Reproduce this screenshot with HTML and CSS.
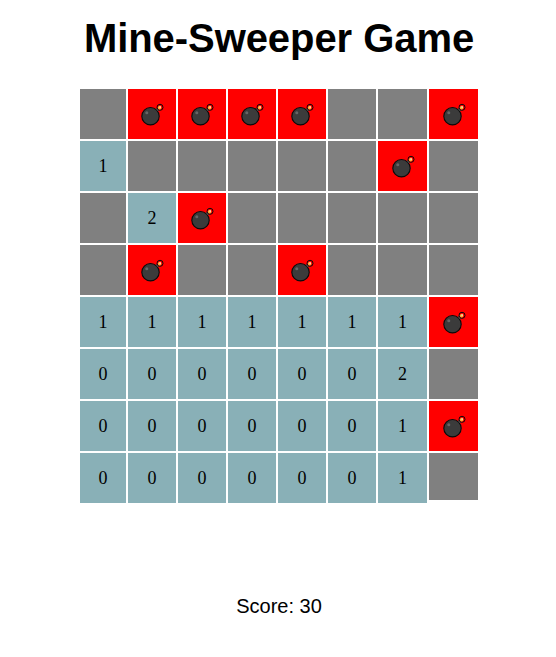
FILE: index.html
```html
<!DOCTYPE html>
<html lang="en">
<head>
<meta charset="utf-8">
<title>Mine-Sweeper Game</title>
<link rel="stylesheet" href="styles.css">
</head>
<body>
<svg class="defs" width="0" height="0" aria-hidden="true">
  <defs>
    <symbol id="bomb" viewBox="0 0 24 24">
      <path d="M14.5 8.5 L17 6 L19 8 L16.5 10.5 Z" fill="#8e8e8e" stroke="#222" stroke-width="0.6"/>
      <circle cx="10.5" cy="14.2" r="8.7" fill="#3b3b3b" stroke="#0a0a0a" stroke-width="1.1"/>
      <circle cx="6.8" cy="10.8" r="1.5" fill="#666"/>
      <circle cx="20" cy="5.3" r="3" fill="#f00" stroke="#0a0a0a" stroke-width="1"/>
      <circle cx="19.6" cy="5.8" r="1.7" fill="#f7b43a"/>
      <rect x="19.6" y="4.4" width="1.2" height="1.2" fill="#fff"/>
    </symbol>
  </defs>
</svg>
<h1 class="title">Mine-Sweeper Game</h1>
<div class="board">
  <div class="cell hidden"></div>
  <div class="cell mine"><svg class="bomb"><use href="#bomb"/></svg></div>
  <div class="cell mine"><svg class="bomb"><use href="#bomb"/></svg></div>
  <div class="cell mine"><svg class="bomb"><use href="#bomb"/></svg></div>
  <div class="cell mine"><svg class="bomb"><use href="#bomb"/></svg></div>
  <div class="cell hidden"></div>
  <div class="cell hidden"></div>
  <div class="cell mine"><svg class="bomb"><use href="#bomb"/></svg></div>

  <div class="cell open">1</div>
  <div class="cell hidden"></div>
  <div class="cell hidden"></div>
  <div class="cell hidden"></div>
  <div class="cell hidden"></div>
  <div class="cell hidden"></div>
  <div class="cell mine"><svg class="bomb"><use href="#bomb"/></svg></div>
  <div class="cell hidden"></div>

  <div class="cell hidden"></div>
  <div class="cell open">2</div>
  <div class="cell mine"><svg class="bomb"><use href="#bomb"/></svg></div>
  <div class="cell hidden"></div>
  <div class="cell hidden"></div>
  <div class="cell hidden"></div>
  <div class="cell hidden"></div>
  <div class="cell hidden"></div>

  <div class="cell hidden"></div>
  <div class="cell mine"><svg class="bomb"><use href="#bomb"/></svg></div>
  <div class="cell hidden"></div>
  <div class="cell hidden"></div>
  <div class="cell mine"><svg class="bomb"><use href="#bomb"/></svg></div>
  <div class="cell hidden"></div>
  <div class="cell hidden"></div>
  <div class="cell hidden"></div>

  <div class="cell open">1</div>
  <div class="cell open">1</div>
  <div class="cell open">1</div>
  <div class="cell open">1</div>
  <div class="cell open">1</div>
  <div class="cell open">1</div>
  <div class="cell open">1</div>
  <div class="cell mine"><svg class="bomb"><use href="#bomb"/></svg></div>

  <div class="cell open">0</div>
  <div class="cell open">0</div>
  <div class="cell open">0</div>
  <div class="cell open">0</div>
  <div class="cell open">0</div>
  <div class="cell open">0</div>
  <div class="cell open">2</div>
  <div class="cell hidden"></div>

  <div class="cell open">0</div>
  <div class="cell open">0</div>
  <div class="cell open">0</div>
  <div class="cell open">0</div>
  <div class="cell open">0</div>
  <div class="cell open">0</div>
  <div class="cell open">1</div>
  <div class="cell mine"><svg class="bomb"><use href="#bomb"/></svg></div>

  <div class="cell open">0</div>
  <div class="cell open">0</div>
  <div class="cell open">0</div>
  <div class="cell open">0</div>
  <div class="cell open">0</div>
  <div class="cell open">0</div>
  <div class="cell open">1</div>
  <div class="cell hidden short"></div>
</div>
<p class="score">Score: 30</p>
</body>
</html>
```
FILE: styles.css
```css
html, body {
  margin: 0;
  padding: 0;
  background: #fff;
}
body {
  width: 556px;
  height: 657px;
  overflow: hidden;
  display: flex;
  flex-direction: column;
  align-items: center;
}
.defs {
  position: absolute;
}
.title {
  margin: 15px 0 0 2px;
  font: bold 40px/46px "Liberation Sans", Arial, sans-serif;
  letter-spacing: -0.06px;
  color: #000;
}
.board {
  margin: 28px 0 0 2px;
  display: grid;
  grid-template-columns: 46px repeat(5, 48px) 49px 49px;
  grid-auto-rows: 50px;
  gap: 2px;
}
.cell {
  display: flex;
  align-items: center;
  justify-content: center;
  font: 18px/20px "Liberation Serif", "Times New Roman", serif;
  color: #000;
}
.hidden { background: #808080; }
.mine { background: #f00; }
.open { background: #89b0b7; }
.short {
  height: 47px;
}
.bomb {
  width: 24px;
  height: 24px;
}
.score {
  margin: 92px 0 0 2px;
  font: 20px/23px "Liberation Sans", Arial, sans-serif;
  color: #000;
}
```
